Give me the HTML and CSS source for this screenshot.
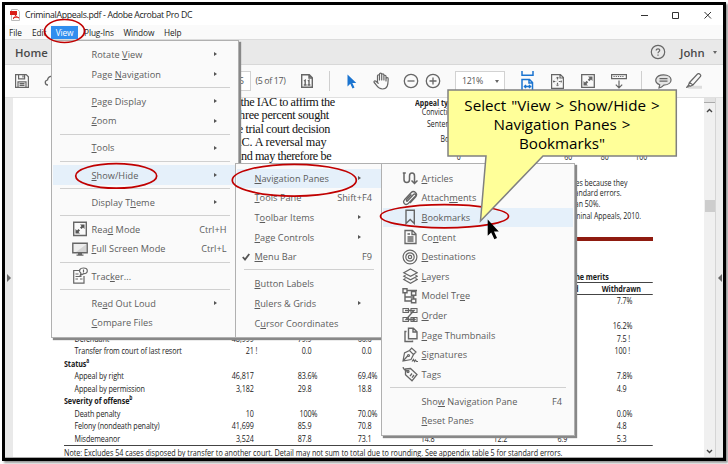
FILE: index.html
```html
<!DOCTYPE html>
<html lang="en">
<head>
  <meta charset="UTF-8" />
  <meta name="viewport" content="width=device-width, initial-scale=1.0"/>
  <title>CriminalAppeals.pdf - Adobe Acrobat Pro DC</title>
  <link rel="stylesheet" href="styles.css">
</head>
<body>
  <div class="window">
    <header class="titlebar">
      <svg class="pdf-icon" width="11" height="12" viewBox="0 0 11 12"><path d="M1.5.5h6l2 2v9h-8z" fill="#fff" stroke="#bbb"/><path d="M0 2h7v4H0z" fill="#d9201a"/><path d="M3 10c2-1 3-4 2.500-6M3 9c2-1 4-1 6-.3M5 5c.5 2 2 3 4 4" fill="none" stroke="#d9201a"/></svg>
      <span class="title">CriminalAppeals.pdf - Adobe Acrobat Pro DC</span>
      <svg class="controls" width="72" height="10" viewBox="0 0 72 10" fill="none" stroke="#333"><path d="M1 5.500h7M32.500 2.500h6v6h-6zM64.500 2l6.500 6.500M71 2l-6.500 6.500"/></svg>
    </header>
    <nav class="menubar">
      <span class="mb-file">File</span><span class="mb-edit">Edit</span><span class="mb-view">View</span><span class="mb-plug">Plug-Ins</span><span class="mb-win">Window</span><span>Help</span>
    </nav>
    <div class="tabbar">
      <span class="home">Home</span>
      <svg class="help" width="16" height="16" viewBox="0 0 16 16" fill="none" stroke="#666" stroke-width="1.200"><circle cx="8" cy="8" r="6.700"/><path d="M6.200 6.600c0-2.400 3.700-2.200 3.500-.1C9.600 7.600 8 7.700 8 9.200M8 10.500v1.300"/></svg>
      <span class="user">John</span>
      <i class="caret"></i>
    </div>
    <div class="toolbar">
      <svg class="t-save" width="14" height="14" viewBox="0 0 14 14" fill="none" stroke="#666" stroke-width="1.200"><path d="M.6.6h10.600l2.200 2.200v10.600H.6zM3.600.8v4h6v-4M3 13.300V7.800h8v5.500M4.500 9.600h5M4.500 11.400h5M8 1.500v2"/></svg>
      <svg class="t-cloud" width="17" height="14" viewBox="0 0 17 14" fill="none" stroke="#666" stroke-width="1.300"><path d="M4 11C1 11 0 7 3.500 6 4 2 9 1 11 4c4 0 5 5 2 7"/></svg>
      <span class="page-box">5</span>
      <span class="page-count">(5 of 17)</span>
      <svg class="t-page" width="12" height="14" viewBox="0 0 12 14" fill="none" stroke="#666" stroke-width="1.400"><path d="M.7.700h7.600l3 3v9.600H.7zM8 1v3h3M3 7l1.200-.8v4.800M2.800 11h2.800M6.800 7L8 6.200V11M6.600 11h2.800"/></svg>
      <i class="divider t-div1"></i>
      <svg class="t-arrow" width="10" height="15" viewBox="0 0 10 15"><path d="M.5.500v12l2.800-2.700 2.200 4.700 2-1-2.200-4.500h4z" fill="#1b74d0"/></svg>
      <svg class="t-hand" width="17" height="18" viewBox="0 0 17 18" fill="none" stroke="#666" stroke-width="1.200" stroke-linecap="round" stroke-linejoin="round"><path d="M4.500 10V3.700c0-1.300 2-1.300 2 0V8M6.500 4V2.200c0-1.500 2.200-1.500 2.200 0V8M8.700 3c0-1.500 2.200-1.400 2.200 0v5M10.900 4.200c0-1.300 2.100-1.200 2.100 0V9M13 6.500c.3-1.300 2.300-1 2.200.4C15 12 15 17 9.500 17 5 17 4 13.500 1.200 10.500.4 9 2 8.400 3 9.300l2.200 2"/></svg>
      <svg class="t-minus" width="16" height="16" viewBox="0 0 16 16" fill="none" stroke="#666" stroke-width="1.300"><circle cx="8" cy="8" r="6.700"/><path d="M4.500 8h7"/></svg>
      <svg class="t-plus" width="16" height="16" viewBox="0 0 16 16" fill="none" stroke="#666" stroke-width="1.300"><circle cx="8" cy="8" r="6.700"/><path d="M4.500 8h7M8 4.500v7"/></svg>
      <span class="zoom-box">121%<i class="caret"></i></span>
      <svg class="t-fit" width="13" height="20" viewBox="0 0 13 20" fill="none" stroke="#1b74d0" stroke-width="1.500"><path d="M1 0v4.200h11V0M1 19V8.500h7.500l3 3V19M8 9v3h3.500M3.500 15.500h6M5 14l-1.500 1.500L5 17M8 14l1.500 1.500L8 17"/></svg>
      <svg class="t-full" width="13" height="15" viewBox="0 0 13 15" fill="none" stroke="#666" stroke-width="1.200"><path d="M.6.600h8.800l3 3v10.700H.6zM9 1v3h3"/><path d="M6.500 3v3.200M6.500 8.800V12M2 7.500h3.200M7.800 7.500H11" stroke-dasharray="2 .6"/><path d="M5.300 4.300l1.200-1.400 1.200 1.400M5.300 10.700l1.200 1.400 1.200-1.400M3.300 6.300L2 7.500l1.300 1.200M9.700 6.300L11 7.500 9.700 8.700" stroke-width=".8"/></svg>
      <svg class="t-expand" width="14" height="14" viewBox="0 0 14 14"><path d="M.7.700h12.600v12.600H.7z" fill="none" stroke="#666" stroke-width="1.300"/><path d="M7 2.500h4.500V7L10 5.500 8.300 7.200 6.800 5.700 8.500 4zM7 11.500H2.500V7L4 8.500l1.700-1.700 1.500 1.500L5.500 10z" fill="#666"/></svg>
      <svg class="t-read" width="16" height="16" viewBox="0 0 16 16" fill="none" stroke="#666" stroke-width="1.200"><path d="M.6 1.600h14.800v4H.6zM8 7.500V15M4.800 11.700L8 15l3.200-3.300"/><path d="M2.500 3.500h11" stroke-dasharray="1.200 1"/></svg>
      <i class="divider t-div2"></i>
      <svg class="t-comment" width="17" height="15" viewBox="0 0 17 15" fill="none" stroke="#666" stroke-width="1.200"><path d="M4 14l.7-3.200C-2 8 .5.800 8.500.800c10 0 10 10 .3 10.300C7.500 12.500 6 13.500 4 14z" fill="#e4e4e4"/><path d="M4.500 4.700h8M4.500 7.200h8"/></svg>
      <svg class="t-pen" width="16" height="16" viewBox="0 0 16 16" fill="none" stroke="#666" stroke-width="1.200"><path d="M4 12.800h12v3H2z" fill="#ddd" stroke="none"/><path d="M3.500 9.500L11.500 1c1.500-1.200 4 .8 3 2.500L7 12zM3.500 9.500L2.500 12l1.500 1.200L7 12M2.500 12L.8 14.200l2.200-.5"/></svg>
    </div>

    <main class="workspace">
      <aside class="rail"><i class="tri-right"></i></aside>
      <article class="page">
        <div class="upper">
          <p class="prose">
            <span class="l1">the IAC to affirm the</span>
            <span class="l2">three percent sought</span>
            <span class="l3">the trial court decision</span>
            <span class="l4">IAC. A reversal may</span>
            <span class="l5">and may therefore be</span>
          </p>
          <div class="figure">
            <div class="chart-labels">
              <b>Appeal type</b>
              <span class="c1">Convictions</span>
              <span class="c2">Sentences</span>
              <span class="c3">Both</span>
            </div>
            <div class="axis"><span>0</span><span>20</span><span>40</span><span>60</span><span>80</span><span>100</span></div>
            <div class="notes">
              <span>cases because they</span>
              <span class="n2">standard errors.</span>
              <span class="n3">than 50%.</span>
              <span class="n4">Criminal Appeals, 2010.</span>
            </div>
          </div>
        </div>
        <div class="red-bar"></div>
        <div class="table">
          <div class="thead over"><b>Appeals reviewed on the merits</b></div>
          <div class="thead cols"><b class="rev">Modified</b><b>Withdrawn</b></div>
          <div class="row"><span></span><span></span><span></span><span></span><span></span><span></span><span></span><span>7.7<i>%</i></span></div>
          <div class="row"></div>
          <div class="row"><span></span><span></span><span></span><span></span><span></span><span></span><span></span><span>16.2<i>%</i></span></div>
          <div class="row"><span>Defendant</span><span>48,999<i></i></span><span>79.9<i></i></span><span>66.6<i></i></span><span></span><span></span><span></span><span>7.5<i> !</i></span></div>
          <div class="row"><span>Transfer from court of last resort</span><span>21<i> !</i></span><span>0.0<i></i></span><span>0.0<i></i></span><span></span><span></span><span></span><span>100<i> !</i></span></div>
          <div class="row group"><b>Status<sup>a</sup></b></div>
          <div class="row"><span>Appeal by right</span><span>46,817<i></i></span><span>83.6<i>%</i></span><span>69.4<i>%</i></span><span></span><span></span><span></span><span>7.8<i>%</i></span></div>
          <div class="row"><span>Appeal by permission</span><span>3,182<i></i></span><span>29.8<i></i></span><span>18.8<i></i></span><span></span><span></span><span></span><span>4.9<i></i></span></div>
          <div class="row group"><b>Severity of offense<sup>b</sup></b></div>
          <div class="row"><span>Death penalty</span><span>10<i></i></span><span>100<i>%</i></span><span>70.0<i>%</i></span><span></span><span></span><span></span><span>0.0<i>%</i></span></div>
          <div class="row"><span>Felony (nondeath penalty)</span><span>41,699<i></i></span><span>85.9<i></i></span><span>70.8<i></i></span><span></span><span></span><span></span><span>4.8<i></i></span></div>
          <div class="row"><span>Misdemeanor</span><span>3,524<i></i></span><span>87.8<i></i></span><span>73.1<i></i></span><span>14.8<i></i></span><span>12.2<i></i></span><span>6.9<i></i></span><span>5.3<i></i></span></div>
          <div class="tnote">Note: Excludes 54 cases disposed by transfer to another court. Detail may not sum to total due to rounding. See appendix table 5 for standard errors.</div>
        </div>
      </article>
      <div class="scrollbar">
        <i class="grip"></i>
        <svg width="7" height="5" viewBox="0 0 7 5"><path d="M1 4l2.500-2.500L6 4" fill="none" stroke="#444" stroke-width="1.400"/></svg>
        <i class="thumb"></i>
        <svg class="down" width="7" height="5" viewBox="0 0 7 5"><path d="M1 1l2.500 2.500L6 1" fill="none" stroke="#444" stroke-width="1.400"/></svg>
      </div>
      <aside class="rail right"><i class="tri-left"></i></aside>
    </main>
  </div>

  <!-- View menu -->
  <div class="menu menu-view">
    <div class="item"><span>Rotate <u>V</u>iew</span><i class="more"></i></div>
    <div class="item"><span>Page <u>N</u>avigation</span><i class="more"></i></div>
    <hr>
    <div class="item"><span><u>P</u>age Display</span><i class="more"></i></div>
    <div class="item"><span><u>Z</u>oom</span><i class="more"></i></div>
    <hr>
    <div class="item"><span><u>T</u>ools</span><i class="more"></i></div>
    <hr>
    <div class="item active"><span><u>S</u>how/Hide</span><i class="more"></i></div>
    <hr>
    <div class="item"><span>Display T<u>h</u>eme</span><i class="more"></i></div>
    <hr>
    <div class="item">
      <svg width="16" height="16" viewBox="0 0 16 16"><path d="M1.700 1.200h12.600v13.300H1.700z" fill="none" stroke="#666" stroke-width="1.400"/><path d="M8 3.500h4.500V8L11 6.500 9.500 8 8 6.500 9.500 5zM8 12.500H3.500V8L5 9.500 6.500 8 8 9.500 6.500 11z" fill="#555"/></svg>
      <span>Rea<u>d</u> Mode</span><kbd>Ctrl+H</kbd></div>
    <div class="item">
      <svg width="16" height="16" viewBox="0 0 16 16"><path d="M.8 2.200h14.400v9.600H.8z" fill="#eee" stroke="#666" stroke-width="1.400"/><path d="M14 3.500V11H4z" fill="#d5d5d5"/><path d="M6 12h4v1.500h1.500v1.300h-7v-1.300H6z" fill="#666"/></svg>
      <span><u>F</u>ull Screen Mode</span><kbd>Ctrl+L</kbd></div>
    <hr>
    <div class="item">
      <svg width="16" height="18" viewBox="0 0 16 18" fill="none" stroke="#666" stroke-width="1.200"><path d="M7 3.500H1.700v12.700H12V9M3.500 7h3M3.500 9.500h6M3.500 12h2.500M8 12h2.500"/><path d="M8.300 8.300l.7-2C6 3.500 8 1 11.500 1c5 0 5 5.300.3 5.700z" fill="#fff"/><path d="M11.500 2.500v3"/></svg>
      <span>Trac<u>k</u>er...</span></div>
    <hr>
    <div class="item"><span>Re<u>a</u>d Out Loud</span><i class="more"></i></div>
    <div class="item"><span><u>C</u>ompare Files</span></div>
  </div>

  <!-- Show/Hide submenu -->
  <div class="menu menu-show">
    <div class="item active"><span><u>N</u>avigation Panes</span><i class="more"></i></div>
    <div class="item"><span><u>T</u>ools Pane</span><kbd>Shift+F4</kbd></div>
    <div class="item"><span>T<u>o</u>olbar Items</span><i class="more"></i></div>
    <div class="item"><span><u>P</u>age Controls</span><i class="more"></i></div>
    <div class="item">
      <svg width="8" height="8" viewBox="0 0 8 8"><path d="M.8 4l2.200 2.500L7.300 1" fill="none" stroke="#555" stroke-width="1.800"/></svg>
      <span><u>M</u>enu Bar</span><kbd>F9</kbd></div>
    <hr>
    <div class="item"><span><u>B</u>utton Labels</span></div>
    <div class="item"><span><u>R</u>ulers &amp; Grids</span><i class="more"></i></div>
    <div class="item"><span>C<u>u</u>rsor Coordinates</span></div>
  </div>

  <!-- Navigation Panes submenu -->
  <div class="menu menu-nav">
    <div class="item">
      <svg width="16" height="16" viewBox="0 0 16 16" fill="none" stroke="#666" stroke-width="1.500"><path d="M3.700 3H2v6.500c0 4 5.500 4 5.500 0V6c0-4 5-4 5 0v7.500M9.500 10.500l3 3 3-3M.8 3h3"/></svg>
      <span><u>A</u>rticles</span></div>
    <div class="item">
      <svg width="16" height="16" viewBox="0 0 16 16" fill="none" stroke="#666" stroke-width="1.300"><path d="M5 11.500l6.500-7c1.400-1.300 3 .2 1.800 1.600l-6.800 7.200c-2.800 2.800-6.500-.6-4-3.500L9 2.700C12-.2 16.500 3.500 13.500 7L8 13M5 11.500c-1.200-1-.3-2 .4-2.700l4-4.300"/></svg>
      <span>Attach<u>m</u>ents</span></div>
    <div class="item active">
      <svg width="16" height="16" viewBox="0 0 16 16" fill="none" stroke="#666" stroke-width="1.400"><path d="M4 1.200h8.300v13.300l-4.100-4-4.200 4z"/></svg>
      <span><u>B</u>ookmarks</span></div>
    <div class="item">
      <svg width="16" height="16" viewBox="0 0 16 16" fill="none" stroke="#666" stroke-width="1.300"><path d="M3 1.500h7.500L14 5v9.500H3zM10 2v3.500h3.500M5.500 5H8M5.500 8h6M5.500 10h6M5.500 12h6"/></svg>
      <span>Co<u>n</u>tent</span></div>
    <div class="item">
      <svg width="16" height="16" viewBox="0 0 16 16" fill="none" stroke="#666" stroke-width="1.200"><circle cx="8" cy="8" r="6.900"/><circle cx="8" cy="8" r="4.200"/><circle cx="8" cy="8" r="1.700"/></svg>
      <span><u>D</u>estinations</span></div>
    <div class="item">
      <svg width="16" height="16" viewBox="0 0 16 16" fill="none" stroke="#666" stroke-width="1.200"><path d="M8.500 1l6.700 3.700-6.700 3.700-6.700-3.700zM3.500 7.200L1.800 8.200l6.700 3.700 6.700-3.700-1.700-1M3.500 10.500l-1.700 1 6.700 3.700 6.700-3.700-1.700-1"/></svg>
      <span><u>L</u>ayers</span></div>
    <div class="item">
      <svg width="16" height="16" viewBox="0 0 16 16" fill="none" stroke="#666" stroke-width="1.400"><path d="M1 .800h4v4H1zM9.500 3.500h4.300v3.700H9.500zM9.500 11h4.300v3.700H9.500zM3 5v8h6M3 9h8.700V7.500M11.700 9v2M5 2.500h10"/></svg>
      <span>Model Tr<u>e</u>e</span></div>
    <div class="item">
      <svg width="16" height="16" viewBox="0 0 16 16" fill="none" stroke="#666" stroke-width="1.100"><path d="M1 1.500h5.500v4H1zM9 1.500h6v4H9zM1 10.500h5.500v4H1zM9 10.500h6v4H9z"/><path d="M3 3.500h9L4 12.500h9M10.500 10.500l2.500 2-2.500 2" stroke-width="1.400"/></svg>
      <span><u>O</u>rder</span></div>
    <div class="item">
      <svg width="16" height="16" viewBox="0 0 16 16" fill="none" stroke="#666" stroke-width="1.400"><path d="M6.500 1.200h4.800L15 4.700v7H6.500zM11 1.500V5h3.700M4.500 4.500H3v10h7.500v-1"/></svg>
      <span><u>P</u>age Thumbnails</span></div>
    <div class="item">
      <svg width="16" height="16" viewBox="0 0 16 16" fill="none" stroke="#666" stroke-width="1.200"><path d="M1 14l1.500-8 5-2.500 4 4-2.500 5zM1.500 13.500l4.500-5M7.500 3.500L9.700 1l4.300 4-2.500 2.500M10 14.500l1.500-2 1 2 1-1.500 1 1.500h1.500"/><circle cx="6.500" cy="8.500" r="1"/></svg>
      <span><u>S</u>ignatures</span></div>
    <div class="item">
      <svg width="16" height="16" viewBox="0 0 16 16" fill="none" stroke="#666" stroke-width="1.300"><path d="M3.500 3l5-.5 6.500 6-5 6.300-6.500-6z"/><circle cx="6" cy="5.500" r="1"/><path d="M5.500 5.200C3 4.500 1.500 3.500 1 1.200M10 7.500l-2 2.700M12 9l-2 2.700"/></svg>
      <span>Ta<u>g</u>s</span></div>
    <hr>
    <div class="item"><span>Sho<u>w</u> Navigation Pane</span><kbd>F4</kbd></div>
    <div class="item"><span><u>R</u>eset Panes</span></div>
  </div>

  <!-- annotations -->
  <svg class="marks" width="728" height="464" viewBox="0 0 728 464">
    <g fill="none" stroke="#c00000" stroke-width="1.700">
      <ellipse cx="64.500" cy="31" rx="20" ry="11.500"/>
      <ellipse cx="116.200" cy="175.900" rx="40.500" ry="12.300"/>
      <ellipse cx="294.300" cy="180.200" rx="62" ry="15.900"/>
      <ellipse cx="444.500" cy="216.200" rx="64" ry="11.600"/>
    </g>
    <path d="M448 90h228.300v66H543l-62.500 65L486 156h-38z" fill="#ffff99" stroke="#808080" stroke-width="1.500"/>
    <path d="M487.700 219.500v16.300l3.500-3.300 3.200 6.800 2.600-1.300-3-6.500h4.800z" fill="#000"/>
  </svg>
  <div class="callout">Select "View &gt; Show/Hide &gt;<br>Navigation Panes &gt;<br>Bookmarks"</div>
</body>
</html>
```

FILE: styles.css
```css
* {
  box-sizing: border-box;
}
body {
  margin: 0;
  width: 728px;
  height: 464px;
  padding: 2px;
  overflow: hidden;
  position: relative;
  background: #fff;
  font-family: "Open Sans", "Noto Sans", sans-serif;
  font-size: 9px;
  color: #222;
  white-space: nowrap;
}
i {
  font-style: normal;
}
svg {
  display: block;
  flex: none;
}
.window {
  width: 724px;
  height: 459px;
  border: 3px solid #000;
  display: flex;
  flex-direction: column;
  background: #fff;
  box-shadow: 2px 2px 2px #999;
}

/* top bars */
.titlebar {
  height: 20px;
  display: flex;
  align-items: center;
  padding-left: 5px;
}
.title {
  margin-left: 4px;
  font-size: 8.8px;
  letter-spacing: -0.35px;
}
.controls {
  margin-left: auto;
  margin-right: 11px;
}
.menubar {
  height: 14px;
  background: #fafafa;
  display: flex;
  align-items: center;
  padding-left: 4px;
  font-size: 8.3px;
  letter-spacing: -0.1px;
}
.mb-file {
  width: 23px;
}
.mb-edit {
  width: 19px;
}
.mb-view {
  width: 27px;
  height: 13px;
  line-height: 13px;
  text-align: center;
  background: #2f8eef;
  color: #fff;
}
.mb-plug {
  margin-left: 6px;
  width: 39.5px;
}
.mb-win {
  width: 40.5px;
}
.tabbar {
  height: 26px;
  border-top: 1px solid #dcdcdc;
  border-bottom: 1px solid #d8d8d8;
  background: #e9e9e9;
  display: flex;
  align-items: center;
  padding-left: 10px;
  font-size: 11.3px;
  font-weight: 600;
  color: #4a4a4a;
}
.help {
  margin-left: auto;
  margin-right: 14px;
}
.user {
  width: 33px;
}
.caret {
  border: 2.5px solid transparent;
  border-top: 3px solid #666;
  border-bottom: 0;
}
.tabbar .caret {
  margin-right: 6px;
}
.toolbar {
  height: 33px;
  background: #fafafa;
  border-bottom: 1px solid #e0e0e0;
  display: flex;
  align-items: center;
  padding-left: 10px;
  font-size: 8.8px;
  letter-spacing: -0.35px;
  color: #555;
}
.t-cloud {
  margin-left: 15px;
}
.page-box {
  margin-left: 169px;
  width: 21px;
  height: 20px;
  line-height: 18px;
  padding-left: 8px;
  border: 1px solid #d2d2d2;
  background: #fff;
}
.page-count {
  margin-left: 4.5px;
  width: 45.5px;
}
.divider {
  width: 1px;
  height: 20px;
  background: #cfcfcf;
}
.t-div1 {
  margin-left: 16px;
}
.t-arrow {
  margin-left: 17px;
}
.t-hand {
  margin-left: 16px;
}
.t-minus {
  margin-left: 13px;
}
.t-plus {
  margin-left: 6px;
}
.zoom-box {
  margin-left: 14px;
  width: 50px;
  height: 20px;
  padding: 0 5px 0 6px;
  border: 1px solid #d2d2d2;
  background: #fff;
  display: flex;
  align-items: center;
  justify-content: space-between;
}
.t-fit {
  margin-left: 16px;
}
.t-full {
  margin-left: 17px;
}
.t-expand {
  margin-left: 17px;
}
.t-read {
  margin-left: 16px;
}
.t-div2 {
  margin-left: 14px;
}
.t-comment {
  margin-left: 13px;
}
.t-pen {
  margin-left: 14px;
}

/* document area */
.workspace {
  flex: 1;
  min-height: 0;
  display: flex;
  border-bottom: 1px solid #aaa;
}
.rail {
  width: 8px;
  background: #e9e9e9;
  display: flex;
  align-items: center;
  justify-content: center;
}
.rail.right {
  width: 8px;
  border-left: 1px solid #d5d5d5;
  background: #ededed;
}
.tri-right {
  border: 4px solid transparent;
  border-left: 4px solid #666;
  border-right: 0;
}
.tri-left {
  border: 4px solid transparent;
  border-right: 4px solid #666;
  border-left: 0;
}
.page {
  width: 691px;
  overflow: hidden;
}
.scrollbar {
  width: 11px;
  background: #f0f0f0;
  display: flex;
  flex-direction: column;
  align-items: center;
}
.grip {
  width: 11px;
  height: 5px;
  background: #e2e2e2;
  border-bottom: 1px solid #aaa;
  margin-bottom: 5px;
}
.thumb {
  width: 10px;
  height: 12px;
  background: #cdcdcd;
  margin-top: 87px;
}
.down {
  margin-top: auto;
  margin-bottom: 3px;
}
.upper {
  height: 139px;
  display: flex;
}
.prose {
  margin: -2px 0 0 216px;
  width: 186px;
  flex: none;
  display: flex;
  flex-direction: column;
  font: 12.2px/13.4px "Liberation Serif", serif;
  color: #111;
}
.l1 {
  padding-left: 11.5px;
  letter-spacing: -0.4px;
}
.l2 {
  padding-left: 7px;
  letter-spacing: -0.3px;
}
.l3 {
  letter-spacing: -0.35px;
}
.l4 {
  letter-spacing: -0.15px;
}
.l5 {
  padding-left: 7px;
  letter-spacing: -0.4px;
}
.figure {
  font-size: 9.3px;
  transform: scaleX(0.75);
  transform-origin: 0 0;
  width: 384px;
  flex: none;
}
.chart-labels {
  display: flex;
  flex-direction: column;
  height: 53px;
}
.chart-labels b {
  line-height: 9px;
}
.c1 {
  padding-left: 9px;
  line-height: 10px;
}
.c2 {
  padding-left: 16px;
  line-height: 14px;
}
.c3 {
  padding-left: 34px;
  line-height: 15px;
}
.axis {
  display: grid;
  grid-template-columns: repeat(6, 48.7px);
  margin-left: 34px;
  line-height: 12px;
  text-align: center;
}
.notes {
  padding-left: 200px;
  margin-top: 15px;
  display: flex;
  flex-direction: column;
  line-height: 9.5px;
}
.n2 {
  padding-left: 5px;
}
.n3 {
  padding-left: 4px;
  margin-top: 2px;
}
.n4 {
  margin-top: 2px;
}
.red-bar {
  width: 589px;
  height: 4px;
  margin-left: 51px;
  background: #8f1b10;
}

/* condensed table: laid out wide, then squeezed to 75% */
.table {
  transform: scaleX(0.75);
  transform-origin: 0 0;
  width: 785.300px;
  margin: 29.5px 0 0 51px;
  font-size: 9.6px;
  letter-spacing: -0.12px;
  color: #1a1a1a;
}
.thead {
  height: 12px;
  line-height: 12px;
  border-bottom: 1px solid #444;
  display: flex;
  justify-content: flex-end;
}
.over b {
  margin-right: 59px;
}
.cols {
  border-bottom: 1px solid #444;
  padding-right: 16px;
  height: 12.5px;
}
.rev {
  margin-right: 31px;
}
.row {
  display: grid;
  grid-template-columns: 246px 16px 77px 80px 84px 97px 80px 79px;
  height: 12.5px;
  line-height: 12.5px;
}
.row span {
  text-align: right;
}
.row span:first-child {
  text-align: left;
  padding-left: 14px;
}
.row i {
  display: inline-block;
  width: 9px;
  text-align: left;
  white-space: pre;
}
.row span:nth-child(2) {
  justify-self: end;
}
sup {
  font-size: 6.5px;
  line-height: 0;
}
.tnote {
  border-top: 1px solid #444;
  line-height: 14px;
  letter-spacing: -0.01px;
}

/* menus */
.menu {
  position: absolute;
  background: #fafafa;
  border: 1px solid #b0b0b0;
  box-shadow: 2px 2px 1px #888;
  padding-top: 3.7px;
  font-size: 9.2px;
  letter-spacing: 0.03px;
  color: #5c5c5c;
}
.menu-view {
  left: 51px;
  top: 40px;
  width: 188px;
  height: 298px;
}
.menu-show {
  left: 235px;
  top: 163px;
  width: 148px;
  height: 175px;
  padding-top: 4.500px;
}
.menu-nav {
  left: 381px;
  top: 163px;
  width: 194px;
  height: 273px;
  padding-top: 4.500px;
}
.item {
  height: 19.6px;
  margin: 0 1px;
  display: flex;
  align-items: center;
  padding-left: 38.5px;
}
.menu-show .item {
  padding-left: 17.5px;
}
.item svg {
  width: 16px;
  margin-left: -20px;
  margin-right: 4px;
}
.menu-show .item svg {
  width: 8px;
  margin-left: -13px;
  margin-right: 5px;
}
.active {
  background: #e5f0fa;
}
.more {
  margin-left: auto;
  margin-right: 20.500px;
  border: 2.500px solid transparent;
  border-left: 3px solid #555;
  border-right: 0;
}
kbd {
  margin-left: auto;
  margin-right: 10.500px;
  font-family: inherit;
}
.menu-show kbd {
  margin-right: 9px;
}
.menu-nav kbd {
  margin-right: 11px;
}
.menu u {
  text-decoration-thickness: 1px;
  text-underline-offset: 1px;
}
hr {
  height: 1px;
  border: 0;
  margin: 3px 8px 3.550px;
  background: #d0d0d0;
}

/* annotations */
.marks {
  position: absolute;
  left: 0;
  top: 0;
}
.callout {
  position: absolute;
  left: 448px;
  top: 96px;
  width: 228px;
  text-align: center;
  font-size: 15.2px;
  word-spacing: 1px;
  line-height: 18.8px;
  color: #000;
}
```
